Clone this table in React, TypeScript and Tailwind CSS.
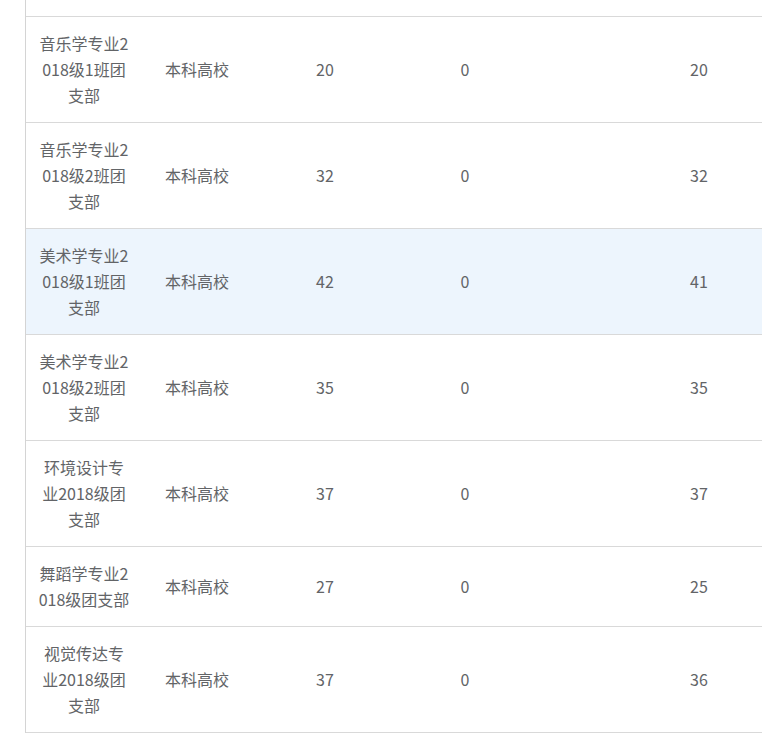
import React from "react";

// One row of the league branch table
interface BranchRow {
  id: number;
  name: string;
  school: string;
  total: number;
  pending: number;
  done: number;
  active?: boolean;
}

const rows: BranchRow[] = [
  { id: 1, name: "音乐学专业2018级1班团支部", school: "本科高校", total: 20, pending: 0, done: 20 },
  { id: 2, name: "音乐学专业2018级2班团支部", school: "本科高校", total: 32, pending: 0, done: 32 },
  { id: 3, name: "美术学专业2018级1班团支部", school: "本科高校", total: 42, pending: 0, done: 41, active: true },
  { id: 4, name: "美术学专业2018级2班团支部", school: "本科高校", total: 35, pending: 0, done: 35 },
  { id: 5, name: "环境设计专业2018级团支部", school: "本科高校", total: 37, pending: 0, done: 37 },
  { id: 6, name: "舞蹈学专业2018级团支部", school: "本科高校", total: 27, pending: 0, done: 25 },
  { id: 7, name: "视觉传达专业2018级团支部", school: "本科高校", total: 37, pending: 0, done: 36 },
];

const cell = "pt-[13px] pb-[14px] px-[11px] text-center align-middle border-b border-[#d9d9d9]";

const App: React.FC = () => {
  return (
    <div
      className="w-[762px] h-[739px] overflow-hidden bg-white text-[#626467] text-[16px] leading-[26px]"
      style={{ fontFamily: '"Noto Sans CJK SC", "Noto Sans", sans-serif' }}
    >
      <div className="ml-[25px] w-[840px] border-l border-[#d4d4d4]">
        <table className="w-[840px] table-fixed border-collapse">
          <colgroup>
            <col className="w-[116px]" />
            <col className="w-[110px]" />
            <col className="w-[146px]" />
            <col className="w-[134px]" />
            <col className="w-[334px]" />
          </colgroup>
          <tbody>
            {/* tail of the row above, cut off by the screen */}
            <tr>
              <td colSpan={5} className="h-[16px] p-0 border-b border-[#d9d9d9]"></td>
            </tr>
            {rows.map((row) => (
              <tr key={row.id} className={row.active ? "bg-[#edf5fd]" : "bg-white"}>
                <td className={`${cell} break-all`}>{row.name}</td>
                <td className={cell}>{row.school}</td>
                <td className={cell}>{row.total}</td>
                <td className={cell}>{row.pending}</td>
                <td className={cell}>{row.done}</td>
              </tr>
            ))}
          </tbody>
        </table>
      </div>
    </div>
  );
};

export default App;
